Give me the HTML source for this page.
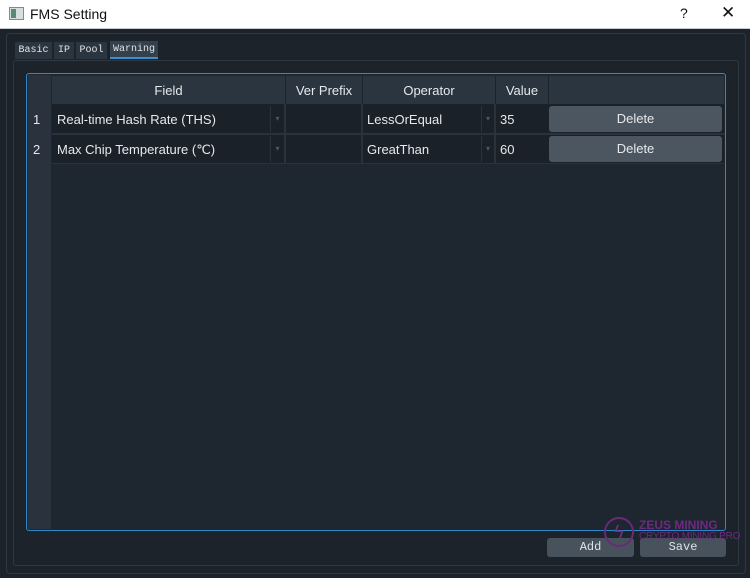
<!DOCTYPE html><html><head><style>
body{margin:0;width:750px;height:578px;background:#1c232b;font-family:"Liberation Sans",sans-serif;position:relative;overflow:hidden}
.a{position:absolute;box-sizing:border-box;white-space:nowrap}
.t{font-size:13px;color:#e6e9ec}
.mono{font-family:"Liberation Mono",monospace;font-size:10px;color:#dfe3e6}
</style></head><body>
<div class="a" style="left:0;top:0;width:750px;height:29px;background:#fff;border-bottom:1px solid #ccc"></div>
<div class="a" style="left:9px;top:7px;width:15px;height:13px;border:1px solid #888;background:#d8dde0"></div>
<div class="a" style="left:11px;top:9px;width:5px;height:9px;background:#5a8a70"></div>
<div class="a" style="left:30px;top:6px;font-size:14px;color:#111">FMS Setting</div>
<div class="a" style="left:680px;top:5px;font-size:14px;color:#111">?</div>
<div class="a" style="left:721px;top:3px;font-size:17px;color:#111">✕</div>
<div class="a" style="left:6px;top:33px;width:740px;height:541px;border:1px solid #2e3842;border-radius:4px"></div>
<div class="a mono" style="left:15px;top:42px;width:37px;height:17px;background:#2b3540;padding:3px 2px;text-align:center">Basic</div>
<div class="a mono" style="left:54px;top:42px;width:20px;height:17px;background:#2b3540;padding:3px 2px;text-align:center">IP</div>
<div class="a mono" style="left:76px;top:42px;width:31px;height:17px;background:#2b3540;padding:3px 2px;text-align:center">Pool</div>
<div class="a mono" style="left:110px;top:41px;width:48px;height:18px;background:#34404c;padding:3px 2px;border-bottom:2px solid #3d8fd0;text-align:center">Warning</div>
<div class="a" style="left:13px;top:60px;width:726px;height:506px;border:1px solid #2e3842;border-radius:3px"></div>
<div class="a" style="left:26px;top:73px;width:700px;height:458px;border:1px solid #2f88c8;border-radius:3px;background:#1e262f"></div>
<div class="a" style="left:28px;top:75px;width:23px;height:454px;background:#2a333d"></div>
<div class="a" style="left:52px;top:76px;width:672px;height:28px;background:#2b3540"></div>
<div class="a" style="left:285px;top:76px;width:1px;height:28px;background:#1c232b"></div>
<div class="a" style="left:362px;top:76px;width:1px;height:28px;background:#1c232b"></div>
<div class="a" style="left:495px;top:76px;width:1px;height:28px;background:#1c232b"></div>
<div class="a" style="left:548px;top:76px;width:1px;height:28px;background:#1c232b"></div>
<div class="a t" style="left:52px;top:83px;width:233px;text-align:center">Field</div>
<div class="a t" style="left:286px;top:83px;width:76px;text-align:center">Ver Prefix</div>
<div class="a t" style="left:363px;top:83px;width:132px;text-align:center">Operator</div>
<div class="a t" style="left:496px;top:83px;width:52px;text-align:center">Value</div>
<div class="a" style="left:52px;top:104px;width:672px;height:59px;background:#1a2129"></div>
<div class="a" style="left:52px;top:133px;width:672px;height:2px;background:#2a333d"></div>
<div class="a" style="left:52px;top:163px;width:672px;height:1px;background:#2a333d"></div>
<div class="a t" style="left:33px;top:112px">1</div>
<div class="a t" style="left:33px;top:142px">2</div>
<div class="a t" style="left:57px;top:112px">Real-time Hash Rate (THS)</div>
<div class="a t" style="left:57px;top:142px">Max Chip Temperature (℃)</div>
<div class="a" style="left:270px;top:106px;width:14px;height:26px;border-left:1px solid #2a333d;color:#555;font-size:8px;text-align:center;line-height:26px">▾</div>
<div class="a" style="left:270px;top:136px;width:14px;height:26px;border-left:1px solid #2a333d;color:#555;font-size:8px;text-align:center;line-height:26px">▾</div>
<div class="a" style="left:284px;top:104px;width:2px;height:59px;background:#2a333d"></div>
<div class="a" style="left:361px;top:104px;width:2px;height:59px;background:#2a333d"></div>
<div class="a" style="left:494px;top:104px;width:2px;height:59px;background:#2a333d"></div>
<div class="a t" style="left:367px;top:112px">LessOrEqual</div>
<div class="a t" style="left:367px;top:142px">GreatThan</div>
<div class="a" style="left:481px;top:106px;width:13px;height:26px;border-left:1px solid #2a333d;color:#555;font-size:8px;text-align:center;line-height:26px">▾</div>
<div class="a" style="left:481px;top:136px;width:13px;height:26px;border-left:1px solid #2a333d;color:#555;font-size:8px;text-align:center;line-height:26px">▾</div>
<div class="a t" style="left:500px;top:112px">35</div>
<div class="a t" style="left:500px;top:142px">60</div>
<div class="a t" style="left:549px;top:106px;width:173px;height:26px;background:#4b5660;border-radius:3px;text-align:center;line-height:26px">Delete</div>
<div class="a t" style="left:549px;top:136px;width:173px;height:26px;background:#4b5660;border-radius:3px;text-align:center;line-height:26px">Delete</div>
<div class="a mono" style="left:547px;top:538px;width:87px;height:19px;background:#47525c;border-radius:3px;text-align:center;line-height:19px;font-size:12px">Add</div>
<div class="a mono" style="left:640px;top:538px;width:86px;height:19px;background:#47525c;border-radius:3px;text-align:center;line-height:19px;font-size:12px">Save</div>
<div class="a" style="left:604px;top:517px;width:30px;height:30px;border:2px solid #6a2a7a;border-radius:50%;color:#7a2a8a;font-size:18px;text-align:center;line-height:26px">ϟ</div>
<div class="a" style="left:639px;top:518px;color:#6e2a80;font-size:12px;font-weight:bold">ZEUS MINING</div>
<div class="a" style="left:639px;top:531px;color:#6e2a80;font-size:10px;letter-spacing:-0.2px">CRYPTO MINING PRO</div>
</body></html>
